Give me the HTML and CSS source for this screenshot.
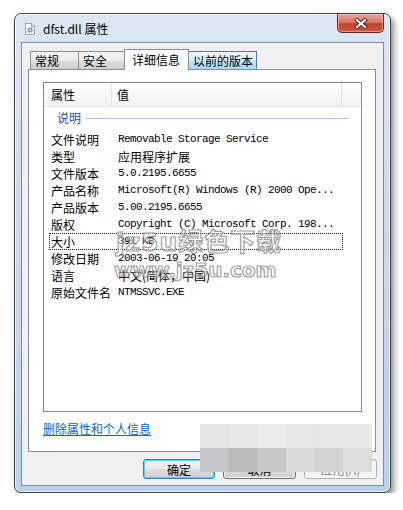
FILE: index.html
```html
<!DOCTYPE html>
<html lang="zh-CN">
<head>
    <meta charset="UTF-8">
    <meta name="viewport" content="width=device-width, initial-scale=1.0">
    <title>dfst.dll 属性</title>
    <link rel="stylesheet" href="styles.css">
</head>
<body>
    <div class="window">
        <div class="titlebar">
            <svg class="file-icon" width="10" height="12" viewBox="0 0 10 12">
                <path d="M0.5 0.5 H6.5 L9.5 3.5 V11.5 H0.5 Z" fill="#fff" stroke="#9aa3ad"/>
                <path d="M6.5 0.5 V3.5 H9.5" fill="#e4e8ec" stroke="#9aa3ad"/>
                <circle cx="5" cy="7" r="2.3" fill="#9fb0c4" stroke="#6d7f95" stroke-width="0.8"/>
                <circle cx="5" cy="7" r="0.8" fill="#fff"/>
            </svg>
            <span class="title">dfst.dll 属性</span>
            <div class="close-btn">
                <svg width="14" height="11" viewBox="0 0 14 11">
                    <path d="M3 2 L11 9 M11 2 L3 9" stroke="#5a1e16" stroke-width="4" stroke-linecap="square"/>
                    <path d="M3 2 L11 9 M11 2 L3 9" stroke="#fff" stroke-width="2.2" stroke-linecap="square"/>
                </svg>
            </div>
        </div>

        <div class="client">
            <div class="tabs">
                <div class="tab tab-general">常规</div>
                <div class="tab tab-security">安全</div>
                <div class="tab tab-details active">详细信息</div>
                <div class="tab tab-versions hover">以前的版本</div>
            </div>

            <div class="panel">
                <div class="listview">
                    <div class="lv-header">
                        <div class="col-name">属性</div>
                        <div class="col-value">值</div>
                        <div class="col-rest"></div>
                    </div>

                    <div class="group">
                        <span class="group-title">说明</span>
                        <span class="group-line"></span>
                    </div>

                    <div class="row"><span class="name">文件说明</span><span class="value mono">Removable Storage Service</span></div>
                    <div class="row"><span class="name">类型</span><span class="value">应用程序扩展</span></div>
                    <div class="row"><span class="name">文件版本</span><span class="value mono">5.0.2195.6655</span></div>
                    <div class="row"><span class="name">产品名称</span><span class="value mono">Microsoft(R) Windows (R) 2000 Ope...</span></div>
                    <div class="row"><span class="name">产品版本</span><span class="value mono">5.00.2195.6655</span></div>
                    <div class="row"><span class="name">版权</span><span class="value mono">Copyright (C) Microsoft Corp. 198...</span></div>
                    <div class="row focused"><span class="name">大小</span><span class="value mono">391 KB</span></div>
                    <div class="row"><span class="name">修改日期</span><span class="value mono">2003-06-19 20:05</span></div>
                    <div class="row"><span class="name">语言</span><span class="value">中文(简体，中国)</span></div>
                    <div class="row"><span class="name">原始文件名</span><span class="value mono">NTMSSVC.EXE</span></div>
                </div>

                <a class="remove-link" href="#">删除属性和个人信息</a>
            </div>

            <div class="buttons">
                <button class="btn default">确定</button>
                <button class="btn">取消</button>
                <button class="btn disabled">应用(A)</button>
            </div>
        </div>

        <!-- watermark of the source site -->
        <div class="watermark">
            <div class="wm-line1">jz5u绿色下载</div>
            <div class="wm-line2">www.jz5u.com</div>
        </div>

        <!-- pixelated patch over the buttons -->
        <div class="mosaic">
            <span style="background:#e5e5e5"></span>
            <span style="background:#e8e8e8"></span>
            <span style="background:#ebebeb"></span>
            <span style="background:#e8e8e8"></span>
            <span style="background:#e6e6e6"></span>
            <span style="background:#e8e8e8"></span>
            <span style="background:#c3c5c7"></span>
            <span style="background:#b9b9b9"></span>
            <span style="background:#c7c7c7"></span>
            <span style="background:#d9d9d9"></span>
            <span style="background:#d2d2d2"></span>
            <span style="background:#dcdcdc"></span>
        </div>
    </div>
</body>
</html>
```

FILE: styles.css
```css
body {
    margin: 0;
    background-color: #fff;
    font-family: "Noto Sans CJK SC", "Noto Sans", sans-serif;
    font-size: 12px;
    color: #000;
}
.window {
    position: relative;
    width: 377px;
    margin: 13px 0 0 14px;
    padding: 0 6px 6px 6px;
    box-sizing: border-box;
    border: 1px solid #3b4149;
    border-radius: 7px;
    background: linear-gradient(to bottom, #dde7f3 0%, #c9dbef 40%, #b9d1ea 100%);
    box-shadow: 3px 4px 6px rgba(0, 0, 0, 0.45), inset 0 0 0 1px rgba(255, 255, 255, 0.7);
}
.titlebar {
    height: 28px;
    display: flex;
    align-items: center;
}
.file-icon {
    margin-left: 4px;
    margin-top: 1px;
}
.title {
    margin-left: 8px;
    margin-top: 1px;
    font-size: 12px;
    color: #000;
}
.close-btn {
    margin-left: auto;
    align-self: flex-start;
    width: 47px;
    height: 19px;
    box-sizing: border-box;
    border: 1px solid #6b2b22;
    border-top: none;
    border-radius: 0 0 5px 5px;
    background: linear-gradient(to bottom, #e7a89c 0%, #d9786a 45%, #c2412f 55%, #cc5a45 100%);
    box-shadow: inset 0 0 0 1px rgba(255, 200, 190, 0.5);
    display: flex;
    align-items: center;
    justify-content: center;
}

/* área do cliente */
.client {
    height: 444px;
    box-sizing: border-box;
    border: 1px solid #7f8ea3;
    background-color: #f0f0f0;
}
.tabs {
    height: 20px;
    margin-top: 6px;
    padding-left: 8px;
    display: flex;
    align-items: flex-end;
}
.tab {
    height: 18px;
    box-sizing: border-box;
    border: 1px solid #898c95;
    border-bottom: none;
    padding-left: 4px;
    line-height: 17px;
    background: linear-gradient(to bottom, #f3f3f3 0%, #ebebeb 50%, #dddddd 51%, #cfcfcf 100%);
    white-space: nowrap;
}
.tab + .tab {
    margin-left: -1px;
}
.tab-general { width: 49px; }
.tab-security { width: 47px; }
.tab-details { width: 65px; }
.tab-versions { width: 69px; }
.tab.active {
    position: relative;
    z-index: 2;
    height: 21px;
    margin-bottom: -1px;
    padding-left: 7px;
    line-height: 19px;
    background: #fff;
}
.tab.hover {
    border-color: #3c7fb1;
    background: linear-gradient(to bottom, #eaf6fd 0%, #d9f0fc 50%, #bee6fd 51%, #a7d9f5 100%);
}
.panel {
    width: 348px;
    height: 383px;
    margin-left: 6px;
    box-sizing: border-box;
    border: 1px solid #898c95;
    background-color: #fff;
    display: flex;
    flex-direction: column;
}

/* lista de propriedades */
.listview {
    width: 319px;
    height: 330px;
    margin: 12px 0 0 14px;
    box-sizing: border-box;
    border: 1px solid #828790;
    background: #fff;
}
.lv-header {
    height: 23px;
    display: flex;
    border-bottom: 1px solid #e3e5e8;
    background: linear-gradient(to bottom, #ffffff 0%, #f7f8f9 50%, #f1f2f4 100%);
    line-height: 23px;
}
.col-name {
    width: 68px;
    padding-left: 7px;
    box-sizing: border-box;
    border-right: 1px solid #e2e5ea;
}
.col-value {
    width: 230px;
    padding-left: 5px;
    box-sizing: border-box;
    border-right: 1px solid #dfe2e7;
}
.col-rest {
    flex: 1;
}
.group {
    height: 18px;
    margin-top: 2px;
    padding-left: 13px;
    padding-right: 12px;
    display: flex;
    align-items: center;
}
.group-title {
    color: #2a48b8;
    line-height: 18px;
}
.group-line {
    flex: 1;
    height: 1px;
    margin-left: 5px;
    background-color: #b4bbe8;
}
.row {
    width: 294px;
    height: 17px;
    margin-left: 5px;
    box-sizing: border-box;
    display: flex;
    align-items: center;
    line-height: 17px;
    white-space: nowrap;
}
.group + .row {
    margin-top: 4px;
}
.row.focused {
    outline: 1px dotted #222;
    outline-offset: -1px;
}
.name {
    width: 69px;
    padding-left: 2px;
    box-sizing: border-box;
}
.value.mono {
    font-family: "Liberation Mono", "Noto Sans CJK SC", monospace;
    font-size: 11px;
    letter-spacing: -0.6px;
}
.remove-link {
    margin: 9px 0 0 14px;
    align-self: flex-start;
    line-height: 16px;
    color: #0066cc;
    text-decoration: underline;
}

/* botões */
.buttons {
    margin-top: 7px;
    padding-right: 6px;
    display: flex;
    justify-content: flex-end;
    gap: 8px;
}
.btn {
    width: 73px;
    height: 20px;
    padding: 0;
    box-sizing: border-box;
    border: 1px solid #707070;
    border-radius: 3px;
    font-family: "Noto Sans CJK SC", sans-serif;
    font-size: 12px;
    color: #000;
    background: linear-gradient(to bottom, #f2f2f2 0%, #ebebeb 50%, #dddddd 51%, #cfcfcf 100%);
    box-shadow: inset 0 0 0 1px rgba(255, 255, 255, 0.8);
}
.btn.default {
    width: 72px;
    border-color: #3c7fb1;
    box-shadow: inset 0 0 0 1px #48d3fb;
}
.btn.disabled {
    border-color: #adb2b5;
    color: #838383;
    background: #f4f4f4;
}

/* sobreposições da captura */
.watermark {
    position: absolute;
    left: 101px;
    top: 214px;
    font-family: "DejaVu Sans", "Noto Sans CJK SC", sans-serif;
    font-weight: bold;
    color: rgba(255, 255, 255, 0.45);
    -webkit-text-stroke: 1.2px rgba(115, 115, 115, 0.7);
    pointer-events: none;
}
.wm-line1 {
    font-size: 25px;
    line-height: 30px;
    letter-spacing: 1px;
}
.wm-line2 {
    margin-left: -2px;
    font-size: 20px;
    line-height: 24px;
}
.mosaic {
    position: absolute;
    left: 185px;
    top: 410px;
    width: 172px;
    height: 48px;
    display: grid;
    grid-template-columns: repeat(6, 1fr);
    grid-template-rows: 24px 24px;
}
```
